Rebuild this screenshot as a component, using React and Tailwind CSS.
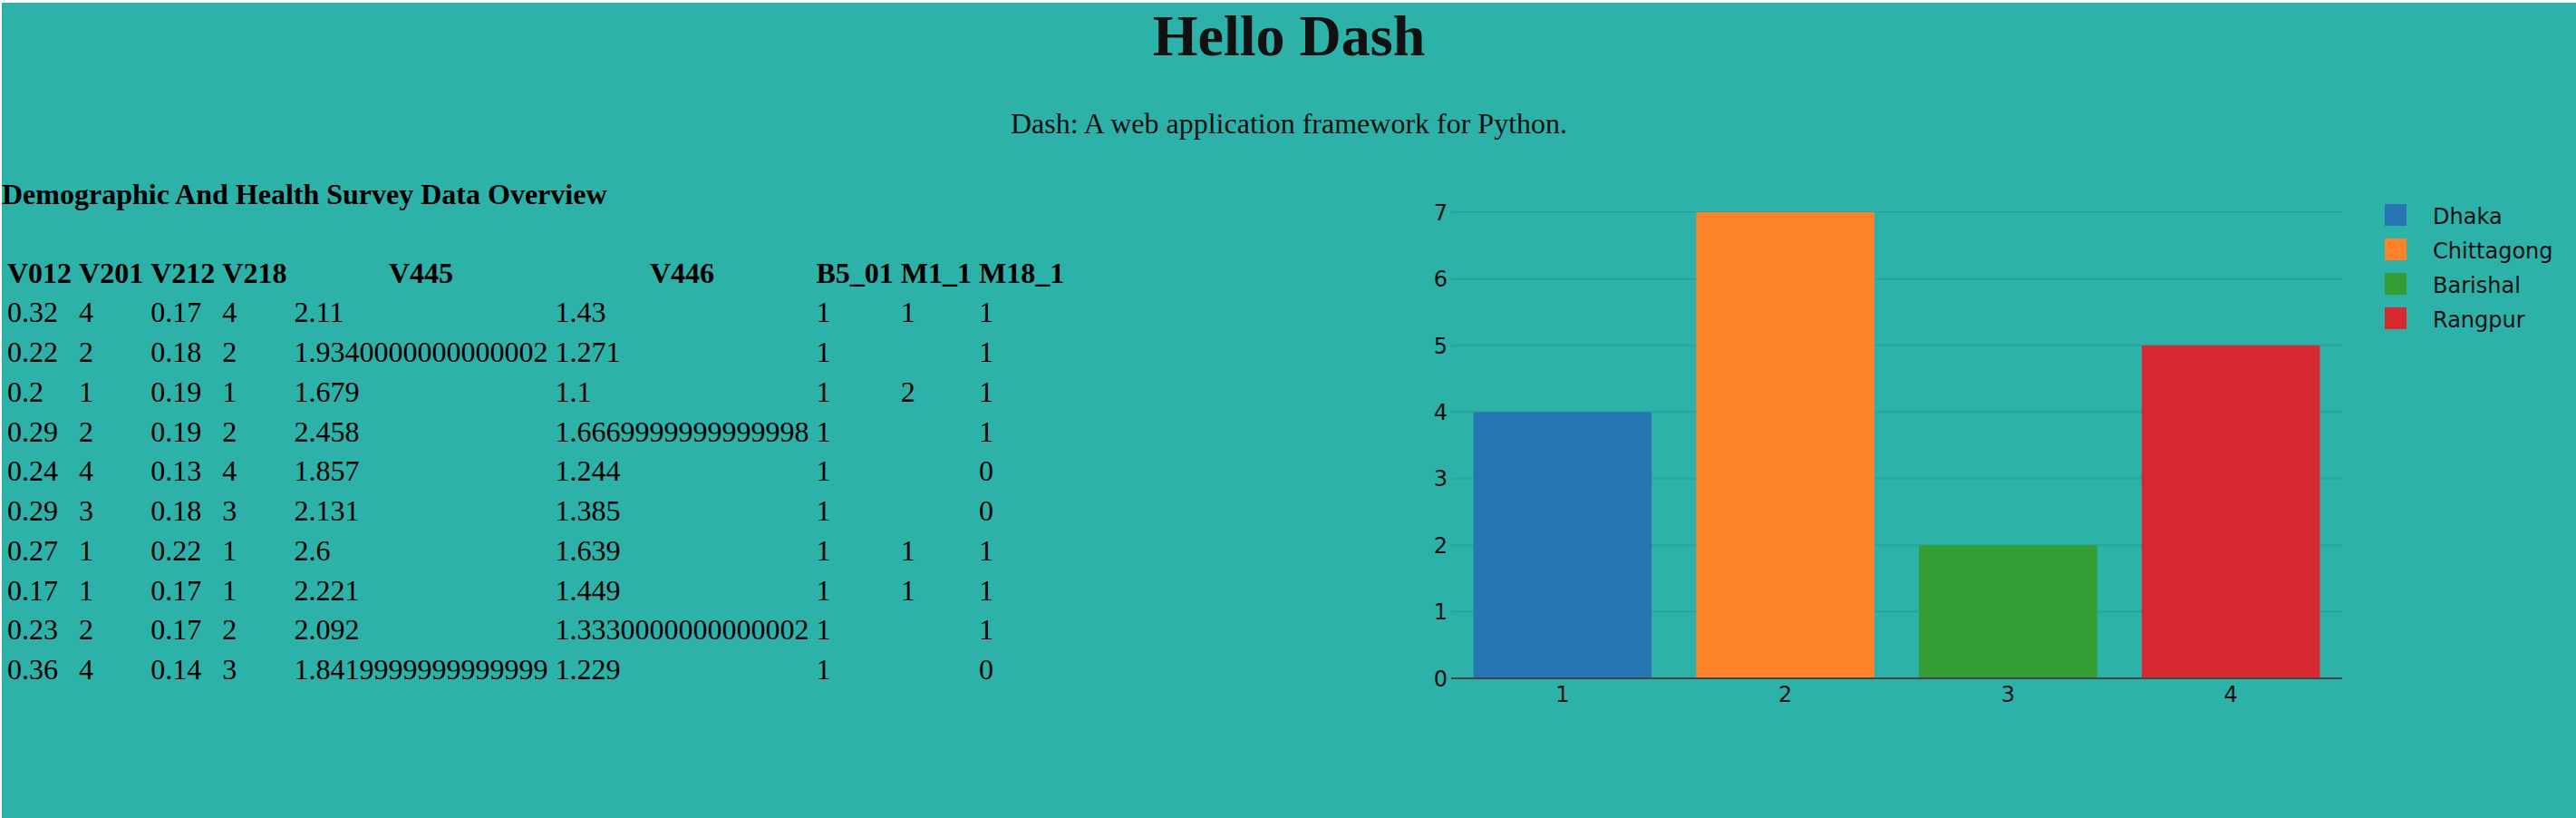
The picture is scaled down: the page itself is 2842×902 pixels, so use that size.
const columns = ['V012', 'V201', 'V212', 'V218', 'V445', 'V446', 'B5_01', 'M1_1', 'M18_1']

const rows = [
  ['0.32', '4', '0.17', '4', '2.11', '1.43', '1', '1', '1'],
  ['0.22', '2', '0.18', '2', '1.9340000000000002', '1.271', '1', '', '1'],
  ['0.2', '1', '0.19', '1', '1.679', '1.1', '1', '2', '1'],
  ['0.29', '2', '0.19', '2', '2.458', '1.6669999999999998', '1', '', '1'],
  ['0.24', '4', '0.13', '4', '1.857', '1.244', '1', '', '0'],
  ['0.29', '3', '0.18', '3', '2.131', '1.385', '1', '', '0'],
  ['0.27', '1', '0.22', '1', '2.6', '1.639', '1', '1', '1'],
  ['0.17', '1', '0.17', '1', '2.221', '1.449', '1', '1', '1'],
  ['0.23', '2', '0.17', '2', '2.092', '1.3330000000000002', '1', '', '1'],
  ['0.36', '4', '0.14', '3', '1.8419999999999999', '1.229', '1', '', '0'],
]

const bars = [
  { name: 'Dhaka', value: 4, color: '#2677b1' },
  { name: 'Chittagong', value: 7, color: '#fe822a' },
  { name: 'Barishal', value: 2, color: '#349e35' },
  { name: 'Rangpur', value: 5, color: '#d7292f' },
]

// plot area in svg coords
const PLOT_L = 61
const PLOT_R = 1044
const ZERO_Y = 568
const UNIT = 73.43
const CAT_W = (PLOT_R - PLOT_L) / 4
const BAR_W = CAT_W * 0.8
const CHART_FONT = 'DejaVu Sans, Verdana, sans-serif'

function BarChart() {
  const y = (v) => ZERO_Y - v * UNIT

  return (
    <svg width="1302" height="620" className="mt-[26px] shrink-0">
      {[1, 2, 3, 4, 5, 6, 7].map((t) => (
        <line key={t} x1={PLOT_L} x2={PLOT_R} y1={y(t)} y2={y(t)} stroke="#29a49c" strokeWidth="2" />
      ))}

      {bars.map((b, i) => (
        <rect
          key={b.name}
          x={PLOT_L + i * CAT_W + (CAT_W - BAR_W) / 2}
          y={y(b.value)}
          width={BAR_W}
          height={b.value * UNIT}
          fill={b.color}
        />
      ))}

      <line x1={PLOT_L} x2={PLOT_R} y1={ZERO_Y} y2={ZERO_Y} stroke="#444" strokeWidth="2" />

      {[0, 1, 2, 3, 4, 5, 6, 7].map((t) => (
        <text key={t} x="57" y={y(t) + 8.7} textAnchor="end" fontSize="24" fill="#111" fontFamily={CHART_FONT}>
          {t}
        </text>
      ))}

      {bars.map((b, i) => (
        <text
          key={b.name}
          x={PLOT_L + (i + 0.5) * CAT_W}
          y="594"
          textAnchor="middle"
          fontSize="24"
          fill="#111"
          fontFamily={CHART_FONT}
        >
          {i + 1}
        </text>
      ))}

      {bars.map((b, i) => (
        <g key={b.name}>
          <rect x="1091" y={45 + i * 38} width="24" height="24" fill={b.color} />
          <text x="1144" y={66.5 + i * 38} fontSize="24" fill="#111" fontFamily={CHART_FONT}>
            {b.name}
          </text>
        </g>
      ))}
    </svg>
  )
}

export default function App() {
  return (
    <div className="h-[902px] bg-white pt-[3px] pl-[2px] font-['Liberation_Serif','Times_New_Roman',serif]">
      <div className="h-[899px] bg-[#2db2a9] text-[#111]">
        <h1 className="pt-[2px] text-center text-[64px] font-bold leading-[1.107]">Hello Dash</h1>
        <p className="mt-[43px] text-center text-[32px] leading-[1.107]">
          Dash: A web application framework for Python.
        </p>

        <div className="flex">
          <div className="flex-1">
            <h4 className="mt-[43px] text-[32px] font-bold leading-[1.107] text-black">
              Demographic And Health Survey Data Overview
            </h4>
            <table className="mt-[45px] border-separate border-spacing-[4px] text-[32px] leading-[35.75px] text-black">
              <thead>
                <tr>
                  {columns.map((c) => (
                    <th key={c} className="p-[2px] text-center font-bold">
                      {c}
                    </th>
                  ))}
                </tr>
              </thead>
              <tbody>
                {rows.map((r, i) => (
                  <tr key={i}>
                    {r.map((cell, j) => (
                      <td key={j} className="p-[2px] text-left">
                        {cell}
                      </td>
                    ))}
                  </tr>
                ))}
              </tbody>
            </table>
          </div>

          <BarChart />
        </div>
      </div>
    </div>
  )
}
